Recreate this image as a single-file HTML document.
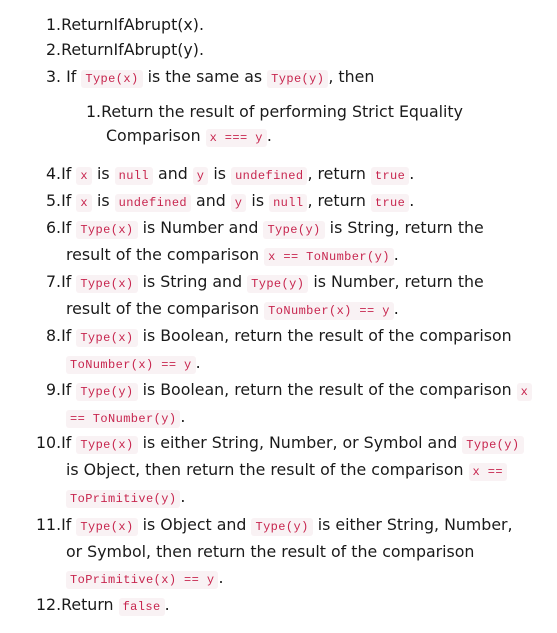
<!DOCTYPE html>
<html><head><meta charset="utf-8"><style>
body{margin:0;width:557px;height:633px;background:#fff;font-family:"DejaVu Sans",Verdana,sans-serif;font-size:15.8px;color:#1a1a1a;position:relative;overflow:hidden}
.l{position:absolute;white-space:nowrap;line-height:20px}
code{font-family:"Liberation Mono",monospace;font-size:12px;color:#c7254e;background:#f9f2f4;padding:2px 4px;border-radius:3px;letter-spacing:0.4px;vertical-align:0px}
</style></head><body>
<div class="l" style="left:46px;top:15px">1.ReturnIfAbrupt(x).</div>
<div class="l" style="left:46px;top:40px">2.ReturnIfAbrupt(y).</div>
<div class="l" style="left:46px;top:67px">3. If <code>Type(x)</code> is the same as <code>Type(y)</code>, then</div>
<div class="l" style="left:86px;top:102px">1.Return the result of performing Strict Equality</div>
<div class="l" style="left:106px;top:126px">Comparison <code>x === y</code>.</div>
<div class="l" style="left:46px;top:164px">4.If <code>x</code> is <code>null</code> and <code>y</code> is <code>undefined</code>, return <code>true</code>.</div>
<div class="l" style="left:46px;top:191px">5.If <code>x</code> is <code>undefined</code> and <code>y</code> is <code>null</code>, return <code>true</code>.</div>
<div class="l" style="left:46px;top:218px">6.If <code>Type(x)</code> is Number and <code>Type(y)</code> is String, return the</div>
<div class="l" style="left:66px;top:245px">result of the comparison <code>x == ToNumber(y)</code>.</div>
<div class="l" style="left:46px;top:272px">7.If <code>Type(x)</code> is String and <code>Type(y)</code> is Number, return the</div>
<div class="l" style="left:66px;top:299px">result of the comparison <code>ToNumber(x) == y</code>.</div>
<div class="l" style="left:46px;top:326px">8.If <code>Type(x)</code> is Boolean, return the result of the comparison</div>
<div class="l" style="left:66px;top:353px"><code>ToNumber(x) == y</code>.</div>
<div class="l" style="left:46px;top:380px">9.If <code>Type(y)</code> is Boolean, return the result of the comparison <code>x</code></div>
<div class="l" style="left:66px;top:407px"><code>== ToNumber(y)</code>.</div>
<div class="l" style="left:36px;top:433px">10.If <code>Type(x)</code> is either String, Number, or Symbol and <code>Type(y)</code></div>
<div class="l" style="left:66px;top:460px">is Object, then return the result of the comparison <code>x ==</code></div>
<div class="l" style="left:66px;top:487px"><code>ToPrimitive(y)</code>.</div>
<div class="l" style="left:36px;top:515px">11.If <code>Type(x)</code> is Object and <code>Type(y)</code> is either String, Number,</div>
<div class="l" style="left:66px;top:542px">or Symbol, then return the result of the comparison</div>
<div class="l" style="left:66px;top:568px"><code>ToPrimitive(x) == y</code>.</div>
<div class="l" style="left:36px;top:595px">12.Return <code>false</code>.</div>
</body></html>
